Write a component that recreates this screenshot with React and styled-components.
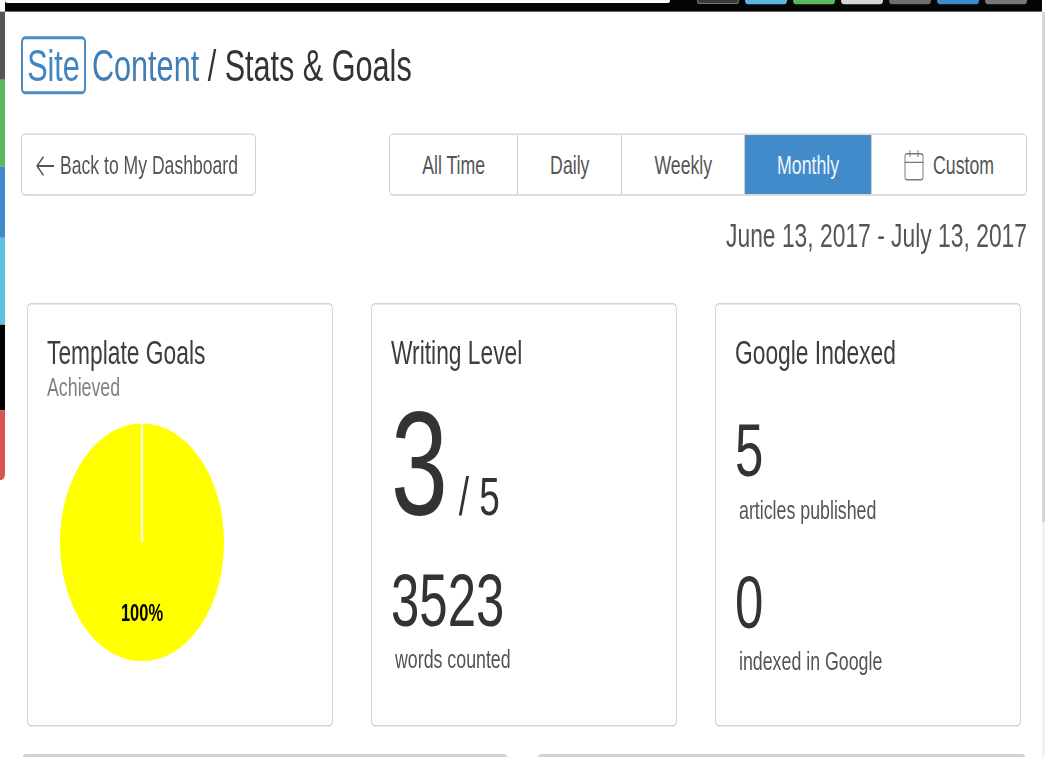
import React from "react";
import styled, { createGlobalStyle } from "styled-components";
import { Calendar } from "lucide-react";

const Global = createGlobalStyle`
  html, body { margin: 0; padding: 0; background: #fff; overflow: hidden; height: 100%; }
  * { box-sizing: border-box; }
`;

/* The reference is a page photographed with a 1.45 vertical stretch: the stage applies it once. */
const Stage = styled.div`
  width: 1045px;
  height: 522.1px;
  transform: scaleY(1.45);
  transform-origin: 0 0;
  filter: blur(0.55px);
  font-family: "Liberation Sans", Arial, sans-serif;
  color: #333;
  display: flex;
  flex-direction: column;
  overflow: hidden;
`;

const TopBar = styled.div`
  height: 7.6px;
  margin-left: 5px;
  margin-right: 3px;
  background: #050505;
  display: flex;
  align-items: flex-start;
`;
const SearchField = styled.div`
  width: 665px;
  height: 2.4px;
  background: #fff;
  border-radius: 0 0 3px 3px;
  margin-right: 27px;
`;
const ToolGroup = styled.div`
  display: flex;
  gap: 6px;
`;
const ToolButton = styled.div`
  width: 42px;
  height: 2.6px;
  background: ${(p) => p.$bg};
  border: ${(p) => (p.$outlined ? "1px solid #777" : "none")};
  border-top: none;
  border-radius: 0 0 4px 4px;
`;

const Shell = styled.div`
  flex: 1;
  display: flex;
  min-height: 0;
`;
const Rail = styled.div`
  width: 5px;
  display: flex;
  flex-direction: column;
  flex-shrink: 0;
`;
const RailPart = styled.div`
  height: ${(p) => p.$h}px;
  background: ${(p) => p.$bg};
  border-bottom-right-radius: ${(p) => (p.$end ? "4px" : "0")};
`;
const Main = styled.div`
  flex: 1;
  min-width: 0;
  padding: 17.2px 15px 0 16px;
`;
const ScrollTrack = styled.div`
  width: 3px;
  flex-shrink: 0;
  background: #f1f1f1;
`;
const ScrollThumb = styled.div`
  height: 352px;
  background: #d6d6d6;
`;

const Heading = styled.h1`
  margin: 0;
  height: 40px;
  display: flex;
  align-items: center;
  font-size: 30.6px;
  font-weight: 400;
  line-height: 34px;
  color: #333;
  white-space: pre;
`;
const SiteBadge = styled.span`
  height: 40px;
  width: 65px;
  display: flex;
  align-items: center;
  justify-content: center;
  border: 2px solid #4a8cc4;
  border-radius: 4px;
  color: #3f86c2;
  margin-right: 6px;
`;
const Crumb = styled.span`
  color: #3f7fb5;
`;

const Toolbar = styled.div`
  margin-top: 27.1px;
  display: flex;
  justify-content: space-between;
`;
const BackButton = styled.button`
  height: 43px;
  width: 235px;
  padding: 1.5px 0 0 14px;
  display: flex;
  align-items: center;
  gap: 6px;
  background: #fff;
  border: 1.5px solid #d0d0d0;
  border-radius: 4px;
  font: 400 17.6px "Liberation Sans", Arial, sans-serif;
  color: #555;
`;
const BackArrow = styled.svg`
  width: 18px;
  height: 15px;
  flex-shrink: 0;
  fill: none;
  stroke: #555;
  stroke-width: 1.3;
`;
const Segments = styled.div`
  display: flex;
  height: 43px;
  border: 1.5px solid #d0d0d0;
  border-radius: 4px;
  overflow: hidden;
`;
const Segment = styled.button`
  padding: 1.5px 32px 0;
  display: flex;
  align-items: center;
  gap: 9px;
  border: none;
  border-left: ${(p) => (p.$first ? "none" : "1.5px solid #d0d0d0")};
  background: ${(p) => (p.$active ? "#428bca" : "#fff")};
  color: ${(p) => (p.$active ? "#eef5fc" : "#555")};
  font: 400 17.7px "Liberation Sans", Arial, sans-serif;
`;
const CalendarIcon = styled(Calendar)`
  margin: 0 -2px;
  color: #777;
`;

const DateRange = styled.div`
  margin-top: 13.2px;
  text-align: right;
  font-size: 22.85px;
  line-height: 28px;
  color: #555;
`;

const CardRow = styled.div`
  margin-top: 32.5px;
  padding-left: 6px;
  display: grid;
  grid-template-columns: repeat(3, 306px);
  column-gap: 38px;
`;
const Card = styled.section`
  height: 292.4px;
  padding: 20px 19px 0;
  background: #fff;
  border: 1.6px solid #d2d2d2;
  border-radius: 4px;
`;
const CardTitle = styled.h2`
  margin: 0;
  font-size: 22.8px;
  font-weight: 400;
  line-height: 26px;
  color: #3d3d3d;
`;
const CardSub = styled.div`
  margin-top: 1.6px;
  font-size: 17.8px;
  line-height: 20px;
  color: #808080;
`;
const Pie = styled.svg`
  display: block;
  margin: 15px 0 0 13px;
  width: 164px;
  height: 164px;
`;
const PieLabel = styled.text`
  font: 700 16.5px "Liberation Sans", Arial, sans-serif;
  fill: #000;
`;
const LevelRow = styled.div`
  margin: 13.5px 0 0 0;
  display: flex;
  align-items: baseline;
`;
const LevelValue = styled.span`
  font-size: 102px;
  line-height: 102px;
  color: #333;
`;
const LevelMax = styled.span`
  margin-left: 11px;
  font-size: 37px;
  color: #333;
`;
const Figure = styled.div`
  margin-top: ${(p) => p.$top}px;
  font-size: 51px;
  line-height: 51px;
  color: #333;
`;
const FigureLabel = styled.div`
  margin: 5.2px 0 0 4px;
  font-size: 17.8px;
  line-height: 20px;
  color: #555;
`;

const LowerRow = styled.div`
  margin-top: 19.3px;
  padding-left: 1px;
  display: grid;
  grid-template-columns: 486px 489px;
  column-gap: 29px;
`;
const LowerPanel = styled.div`
  height: 30px;
  border-top: 2px solid #d2d2d2;
  border-radius: 4px 4px 0 0;
`;

const tools = [
  { bg: "#3a3a3a", outlined: true },
  { bg: "#5bb8dc" },
  { bg: "#5cb85c" },
  { bg: "#d4d4d4" },
  { bg: "#6f6f6f" },
  { bg: "#428bca" },
  { bg: "#777" },
];
const rail = [
  { h: 47.6, bg: "#555" },
  { h: 60, bg: "#5cb85c" },
  { h: 49, bg: "#428bca" },
  { h: 60, bg: "#5bc0de" },
  { h: 59.3, bg: "#000" },
  { h: 48, bg: "#d9534f", end: true },
];
const periods = ["All Time", "Daily", "Weekly", "Monthly"];

export default function App() {
  return (
    <>
      <Global />
      <Stage>
        <TopBar>
          <SearchField />
          <ToolGroup>
            {tools.map((t, i) => (
              <ToolButton key={i} $bg={t.bg} $outlined={t.outlined} />
            ))}
          </ToolGroup>
        </TopBar>
        <Shell>
          <Rail>
            {rail.map((r, i) => (
              <RailPart key={i} $h={r.h} $bg={r.bg} $end={r.end} />
            ))}
          </Rail>
          <Main>
            <Heading>
              <SiteBadge>Site</SiteBadge>
              <Crumb>Content</Crumb> / Stats &amp; Goals
            </Heading>
            <Toolbar>
              <BackButton>
                <BackArrow viewBox="0 0 18 15">
                  <path d="M18 7.5H1M7.5 1L1 7.5L7.5 14" />
                </BackArrow>
                Back to My Dashboard
              </BackButton>
              <Segments>
                {periods.map((p, i) => (
                  <Segment key={p} $first={i === 0} $active={p === "Monthly"}>
                    {p}
                  </Segment>
                ))}
                <Segment>
                  <CalendarIcon size={24} strokeWidth={0.95} />
                  Custom
                </Segment>
              </Segments>
            </Toolbar>
            <DateRange>June 13, 2017 - July 13, 2017</DateRange>
            <CardRow>
              <Card>
                <CardTitle>Template Goals</CardTitle>
                <CardSub>Achieved</CardSub>
                <Pie viewBox="0 0 164 164">
                  <circle cx="82" cy="82" r="82" fill="#ffff00" />
                  <line x1="82" y1="0" x2="82" y2="82" stroke="#f6f6e6" strokeWidth="2.4" />
                  <PieLabel x="82" y="136" textAnchor="middle">100%</PieLabel>
                </Pie>
              </Card>
              <Card>
                <CardTitle>Writing Level</CardTitle>
                <LevelRow>
                  <LevelValue>3</LevelValue>
                  <LevelMax>/ 5</LevelMax>
                </LevelRow>
                <Figure $top={18.1}>3523</Figure>
                <FigureLabel>words counted</FigureLabel>
              </Card>
              <Card>
                <CardTitle>Google Indexed</CardTitle>
                <Figure $top={29.8}>5</Figure>
                <FigureLabel>articles published</FigureLabel>
                <Figure $top={28}>0</Figure>
                <FigureLabel>indexed in Google</FigureLabel>
              </Card>
            </CardRow>
            <LowerRow>
              <LowerPanel />
              <LowerPanel />
            </LowerRow>
          </Main>
          <ScrollTrack>
            <ScrollThumb />
          </ScrollTrack>
        </Shell>
      </Stage>
    </>
  );
}
